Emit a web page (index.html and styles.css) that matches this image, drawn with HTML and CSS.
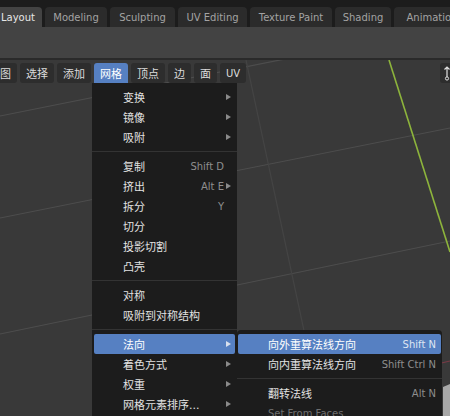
FILE: index.html
```html
<!DOCTYPE html>
<html>
<head>
<meta charset="utf-8">
<link rel="stylesheet" href="styles.css">
</head>
<body>
<div class="tabs">
  <div class="tab active w-layout">Layout</div>
  <div class="tab w-modeling">Modeling</div>
  <div class="tab w-sculpting">Sculpting</div>
  <div class="tab w-uv">UV Editing</div>
  <div class="tab w-texture">Texture Paint</div>
  <div class="tab w-shading">Shading</div>
  <div class="tab w-animation">Animation</div>
</div>
<div class="topbar"></div>
<div class="viewport">
  <svg class="grid" width="450" height="356" viewBox="0 60 450 356">
    <line x1="0" y1="116" x2="450" y2="26" class="gl"/>
    <line x1="0" y1="218" x2="450" y2="128" class="gl"/>
    <line x1="0" y1="334" x2="450" y2="241" class="gl"/>
    <line x1="246" y1="60" x2="306" y2="340" class="gl faint"/>
    <line x1="450" y1="361" x2="200" y2="420" class="xaxis"/>
    <line x1="389" y1="60" x2="450" y2="252" class="yaxis"/>
    <polygon points="443,387 450,384 450,416 443,416" class="obj"/>
  </svg>
  <div class="toolbar">
    <div class="btn">视图</div>
    <div class="btn">选择</div>
    <div class="btn">添加</div>
    <div class="btn on">网格</div>
    <div class="btn">顶点</div>
    <div class="btn">边</div>
    <div class="btn">面</div>
    <div class="btn latin">UV</div>
  </div>
  <div class="gizmo">
    <svg width="12" height="16" viewBox="0 0 12 16">
      <path d="M6 2 L6 12 M3.5 4.5 L6 2 L8.5 4.5" fill="none" stroke="#e0e0e0" stroke-width="1.2"/>
      <circle cx="6" cy="13.5" r="1.6" fill="none" stroke="#e0e0e0" stroke-width="1"/>
    </svg>
  </div>
</div>

<div class="menu">
  <div class="item"><span class="lbl">变换</span><span class="sc"></span><span class="arr"></span></div>
  <div class="item"><span class="lbl">镜像</span><span class="sc"></span><span class="arr"></span></div>
  <div class="item"><span class="lbl">吸附</span><span class="sc"></span><span class="arr"></span></div>
  <div class="sep"></div>
  <div class="item"><span class="lbl">复制</span><span class="sc">Shift D</span><span class="noarr"></span></div>
  <div class="item"><span class="lbl">挤出</span><span class="sc">Alt E</span><span class="arr"></span></div>
  <div class="item"><span class="lbl">拆分</span><span class="sc">Y</span><span class="noarr"></span></div>
  <div class="item"><span class="lbl">切分</span><span class="sc"></span><span class="noarr"></span></div>
  <div class="item"><span class="lbl">投影切割</span><span class="sc"></span><span class="noarr"></span></div>
  <div class="item"><span class="lbl">凸壳</span><span class="sc"></span><span class="noarr"></span></div>
  <div class="sep"></div>
  <div class="item"><span class="lbl">对称</span><span class="sc"></span><span class="noarr"></span></div>
  <div class="item"><span class="lbl">吸附到对称结构</span><span class="sc"></span><span class="noarr"></span></div>
  <div class="sep"></div>
  <div class="item hl"><span class="lbl">法向</span><span class="sc"></span><span class="arr"></span></div>
  <div class="item"><span class="lbl">着色方式</span><span class="sc"></span><span class="arr"></span></div>
  <div class="item"><span class="lbl">权重</span><span class="sc"></span><span class="arr"></span></div>
  <div class="item"><span class="lbl">网格元素排序...</span><span class="sc"></span><span class="arr"></span></div>
</div>

<div class="submenu">
  <div class="item hl"><span class="lbl">向外重算法线方向</span><span class="sc">Shift N</span></div>
  <div class="item"><span class="lbl">向内重算法线方向</span><span class="sc">Shift Ctrl N</span></div>
  <div class="sep"></div>
  <div class="item"><span class="lbl">翻转法线</span><span class="sc">Alt N</span></div>
  <div class="item dis"><span class="lbl latin">Set From Faces</span><span class="sc"></span></div>
</div>
</body>
</html>
```

FILE: styles.css
```css
html, body {
  margin: 0;
  padding: 0;
}
body {
  width: 450px;
  height: 416px;
  overflow: hidden;
  position: relative;
  background: #393939;
  font-family: "DejaVu Sans", "Noto Sans CJK SC", sans-serif;
  font-size: 10px;
  color: #e2e2e2;
}

.tabs {
  height: 27px;
  background: #1c1c1c;
  display: flex;
  align-items: flex-end;
  gap: 3px;
  margin-left: -6px;
  overflow: hidden;
  white-space: nowrap;
}
.tab {
  flex: none;
  height: 20px;
  background: #2b2b2b;
  color: #a3a3a3;
  border-radius: 4px 4px 0 0;
  display: flex;
  align-items: center;
  justify-content: center;
}
.tab.active {
  background: #434343;
  color: #e6e6e6;
}
.w-layout { width: 48px; }
.w-modeling { width: 62px; }
.w-sculpting { width: 65px; }
.w-uv { width: 69px; }
.w-texture { width: 82px; }
.w-shading { width: 56px; }
.w-animation { width: 76px; }

.topbar {
  height: 31px;
  background: #434343;
  border-bottom: 2px solid #2a2a2a;
}

.viewport {
  position: relative;
  height: 356px;
  background: #393939;
}
.grid {
  position: absolute;
  left: 0;
  top: 0;
}
.gl {
  stroke: #4d4d4d;
  stroke-width: 1.2;
}
.gl.faint {
  stroke: #444444;
}
.xaxis {
  stroke: #7a3a46;
  stroke-width: 1.2;
}
.yaxis {
  stroke: #8db43c;
  stroke-width: 1.6;
}
.obj {
  fill: #a8a8a8;
}

.toolbar {
  position: relative;
  display: flex;
  gap: 3px;
  margin-left: -17px;
  padding-top: 3px;
}
.btn {
  flex: none;
  height: 20px;
  padding: 0 6px;
  background: #2d2d2d;
  border-radius: 3px;
  display: flex;
  align-items: center;
  font-size: 11px;
  color: #dcdcdc;
}
.btn.latin {
  font-size: 10px;
  padding: 0 6px;
}
.btn.on {
  background: #5680c2;
  color: #ffffff;
  border-radius: 3px 3px 0 0;
}

.gizmo {
  position: absolute;
  left: 440px;
  top: 3px;
  width: 22px;
  height: 20px;
  background: #2d2d2d;
  border-radius: 3px;
  display: flex;
  align-items: center;
  padding-left: 1px;
}

.menu {
  position: absolute;
  left: 92px;
  top: 83px;
  width: 145px;
  bottom: 0;
  background: #1c1c1c;
  padding-top: 4px;
  box-sizing: border-box;
}
.submenu {
  position: absolute;
  left: 237px;
  top: 330px;
  width: 205px;
  bottom: 0;
  background: #1c1c1c;
  padding-top: 4px;
  box-sizing: border-box;
  border-radius: 4px 4px 0 0;
}
.item {
  height: 20px;
  display: flex;
  align-items: center;
  padding: 0 4px 0 29px;
  margin: 0 2px;
  border-radius: 2px;
}
.submenu .item {
  margin: 0 1px;
  padding: 0 5px 0 30px;
}
.item.hl {
  background: #5680c2;
  color: #ffffff;
}
.lbl {
  font-size: 11px;
  flex: 1;
  white-space: nowrap;
}
.lbl.latin {
  font-size: 10px;
}
.sc {
  color: #8e8e8e;
  white-space: nowrap;
}
.item.hl .sc {
  color: #dfe6f2;
}
.item.dis .lbl {
  color: #6e6e6e;
}
.arr, .noarr {
  width: 5px;
  height: 6px;
  margin-left: 2px;
  box-sizing: border-box;
}
.arr {
  border-left: 5px solid #8a8a8a;
  border-top: 3px solid transparent;
  border-bottom: 3px solid transparent;
}
.item.hl .arr {
  border-left-color: #d8e0ee;
}
.sep {
  height: 9px;
  display: flex;
  align-items: center;
}
.sep::before {
  content: "";
  display: block;
  width: 100%;
  height: 1px;
  background: #333333;
}
```
